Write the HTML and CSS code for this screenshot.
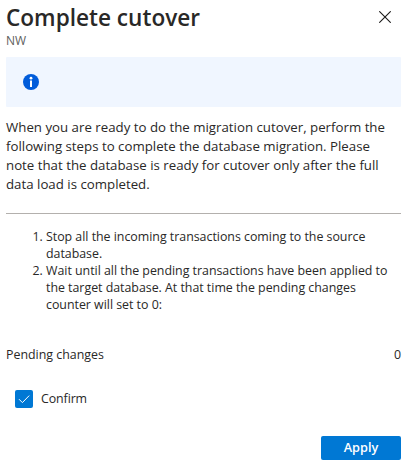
FILE: index.html
```html
<!DOCTYPE html>
<html lang="en">
<head>
<meta charset="utf-8">
<title>Complete cutover</title>
<link rel="stylesheet" href="styles.css">
</head>
<body>
<main class="panel">
  <header class="header">
    <div>
      <h1 class="title">Complete cutover</h1>
      <p class="subtitle">NW</p>
    </div>
    <button class="close" aria-label="Close">
      <svg width="12" height="12" viewBox="0 0 12 12"><path d="M.3.3l11.4 11.4M11.7.3L.3 11.7" stroke="#1b1a19" stroke-width="1.1" fill="none"/></svg>
    </button>
  </header>
  <div class="info">
    <svg width="16" height="16" viewBox="0 0 16 16"><circle cx="8" cy="8" r="8" fill="#015cda"/><circle cx="8" cy="4.2" r="1.4" fill="#fff"/><path d="M7 6.5h2V13H7z" fill="#fff"/></svg>
  </div>
  <p class="intro">
    <span class="line">When you are ready to do the migration cutover, perform the</span>
    <span class="line">following steps to complete the database migration. Please</span>
    <span class="line">note that the database is ready for cutover only after the full</span>
    <span class="line">data load is completed.</span>
  </p>
  <ol class="steps">
    <li><span class="line">Stop all the incoming transactions coming to the source</span><span class="line">database.</span></li>
    <li><span class="line">Wait until all the pending transactions have been applied to</span><span class="line">the target database. At that time the pending changes</span><span class="line">counter will set to 0:</span></li>
  </ol>
  <div class="pending"><span>Pending changes</span><span>0</span></div>
  <label class="confirm">
    <span class="box"><svg width="18" height="18" viewBox="0 0 18 18"><path d="M4 9.2l3.4 3.4L14.2 5.6" stroke="#fff" stroke-width="1" fill="none"/></svg></span>
    <span class="confirm-label">Confirm</span>
  </label>
  <footer class="footer"><button class="apply">Apply</button></footer>
</main>
</body>
</html>
```

FILE: styles.css
```css
* { box-sizing: border-box; }
body { margin: 0; background: #fff; color: #292827; font: 12.4px/19px "Open Sans", "Noto Sans", sans-serif; }
.panel { width: 412px; height: 473px; padding: 4px 11px 0 6px; overflow: hidden; }
.header { display: flex; justify-content: space-between; height: 53px; }
.title { margin: 0; font-size: 22.6px; line-height: 27px; font-weight: 600; white-space: nowrap; }
.subtitle { margin: 2px 0 0; font-size: 12px; line-height: 16px; color: #605e5c; }
.close { border: 0; padding: 0; margin: 7px 10px 0 0; width: 12px; height: 12px; background: none; display: flex; }
.info { height: 50px; background: #f0f6ff; border-radius: 1px; padding: 17px; display: flex; }
.intro { margin: 11px 0 0; height: 96px; border-bottom: 1px solid #b3b0ad; font-size: 13.28px; }
.line { display: block; white-space: nowrap; }
.steps { margin: 14px 0 0; padding-left: 40px; line-height: 17px; letter-spacing: -.02px; }
.pending { display: flex; justify-content: space-between; margin-top: 32px; }
.confirm { display: flex; margin: 26px 0 0 9px; gap: 8px; align-items: center; height: 18px; }
.confirm-label { letter-spacing: -.1px; margin-top: -2px; }
.box { width: 18px; height: 18px; background: #0078d4; border-radius: 2px; display: flex; }
.footer { display: flex; justify-content: flex-end; margin-top: 28px; }
.apply { border: 0; border-radius: 2px; background: #0078d4; color: #fff; font: 600 12.7px/22px "Open Sans", sans-serif; width: 80px; height: 24px; padding: 0 0 2px; }
```
